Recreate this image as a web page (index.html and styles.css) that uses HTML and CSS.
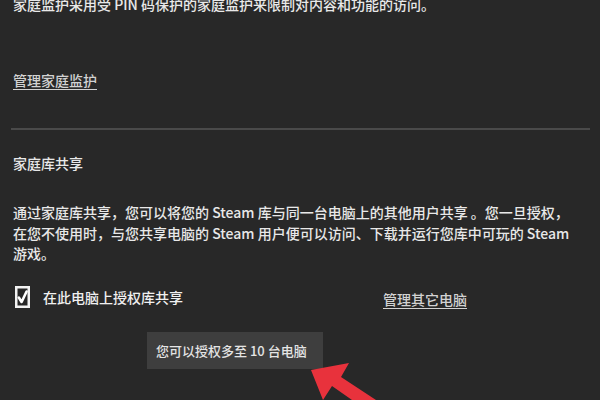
FILE: index.html
```html
<!DOCTYPE html>
<html lang="zh-CN">
<head>
<meta charset="utf-8">
<link rel="stylesheet" href="styles.css">
</head>
<body>
<div class="page">
  <p class="intro">家庭监护采用受 PIN 码保护的家庭监护来限制对内容和功能的访问。</p>
  <a class="link manage-family">管理家庭监护</a>
  <div class="divider"></div>
  <h2 class="title">家庭库共享</h2>
  <p class="desc">通过家庭库共享，您可以将您的 Steam 库与同一台电脑上的其他用户共享 。您一旦授权，<br>在您不使用时，与您共享电脑的 Steam 用户便可以访问、下载并运行您库中可玩的 Steam<br>游戏。</p>
  <div class="row">
    <label class="check">
      <span class="box">
        <svg viewBox="0 0 15 22" width="15" height="22">
          <rect x="1.25" y="1.25" width="12.5" height="19.5" fill="#262626" stroke="#f2f2f2" stroke-width="2.5"/>
          <path d="M3.8 11.5 L6.6 16 L11.6 5.5" fill="none" stroke="#ffffff" stroke-width="2.6" stroke-linejoin="round" stroke-linecap="round"/>
        </svg>
      </span>
      <span class="check-text">在此电脑上授权库共享</span>
    </label>
    <a class="link other">管理其它电脑</a>
  </div>
  <div class="tip">您可以授权多至 10 台电脑</div>
</div>
<svg class="arrow" viewBox="0 0 600 400" width="600" height="400">
  <polygon points="311,370 349,363 341,377 376,400 352,400 332,386 323,400" fill="#e8323c"/>
</svg>
</body>
</html>
```
FILE: styles.css
```css
html, body {
  margin: 0;
  padding: 0;
  background: #282828;
  width: 600px;
  height: 400px;
  overflow: hidden;
}
body {
  font-family: "Noto Sans CJK SC", "Noto Sans", sans-serif;
  color: #e8e8e8;
  font-size: 14px;
  font-weight: 500;
  position: relative;
}
.page {
  padding: 0 12px 0 13px;
  display: flex;
  flex-direction: column;
  align-items: flex-start;
}
.intro {
  margin: -6px 0 0;
  line-height: 20px;
  white-space: nowrap;
}
.link {
  color: #d2d2d2;
  text-decoration: underline;
  text-underline-offset: 3px;
  line-height: 20px;
}
.manage-family {
  margin-top: 56px;
}
.divider {
  align-self: stretch;
  margin: 38px -2px 0 -2px;
  height: 2px;
  background: #4a4a4a;
}
.title {
  margin: 23px 0 0;
  font-size: 14px;
  font-weight: 500;
  line-height: 20px;
}
.desc {
  margin: 29px 0 0;
  line-height: 20.5px;
  white-space: nowrap;
}
.row {
  margin-top: 22px;
  display: flex;
  align-items: center;
  height: 22px;
}
.check {
  display: flex;
  align-items: center;
  width: 370px;
}
.box {
  display: block;
  width: 15px;
  height: 22px;
  margin-left: 2px;
}
.box svg { display: block; }
.check-text {
  margin-left: 13px;
  color: #f0f0f0;
}
.other {
  margin-top: 4px;
}
.tip {
  margin: 24px 0 0 134px;
  width: 167px;
  height: 37px;
  padding-left: 9px;
  background: #3e3e3e;
  font-size: 13px;
  line-height: 37px;
  color: #e4e4e4;
  white-space: nowrap;
}
.arrow {
  position: absolute;
  left: 0;
  top: 0;
}
```
